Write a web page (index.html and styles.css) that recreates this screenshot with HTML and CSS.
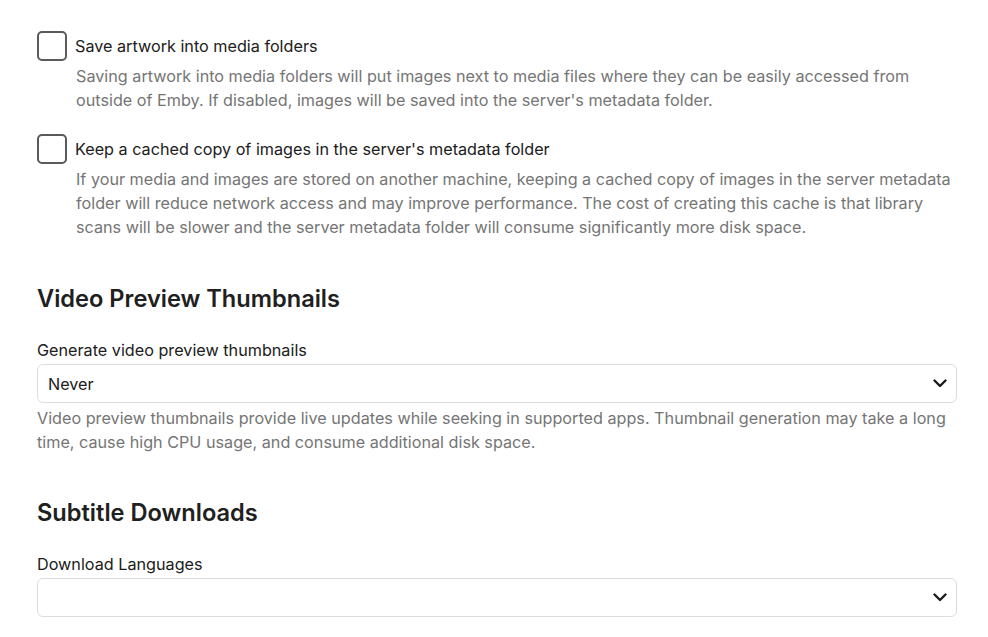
FILE: index.html
```html
<!DOCTYPE html>
<html lang="en">
<head>
<meta charset="utf-8">
<link rel="stylesheet" href="styles.css">
</head>
<body>
<div class="page">
  <div class="check-item">
    <label class="check-row">
      <span class="box"></span>
      <span class="check-label">Save artwork into media folders</span>
    </label>
    <div class="check-desc">Saving artwork into media folders will put images next to media files where they can be easily accessed from outside of Emby. If disabled, images will be saved into the server's metadata folder.</div>
  </div>
  <div class="check-item">
    <label class="check-row">
      <span class="box"></span>
      <span class="check-label">Keep a cached copy of images in the server's metadata folder</span>
    </label>
    <div class="check-desc">If your media and images are stored on another machine, keeping a cached copy of images in the server metadata folder will reduce network access and may improve performance. The cost of creating this cache is that library scans will be slower and the server metadata folder will consume significantly more disk space.</div>
  </div>

  <h2 class="section-title">Video Preview Thumbnails</h2>
  <div class="field">
    <div class="field-label">Generate video preview thumbnails</div>
    <div class="select">
      <span class="select-value">Never</span>
      <svg class="chev" width="14" height="9" viewBox="0 0 14 9"><path d="M1.5 1.5 L7 7 L12.5 1.5" fill="none" stroke="#1a1a1a" stroke-width="2.4" stroke-linecap="round" stroke-linejoin="round"/></svg>
    </div>
    <div class="field-desc">Video preview thumbnails provide live updates while seeking in supported apps. Thumbnail generation may take a long time, cause high CPU usage, and consume additional disk space.</div>
  </div>

  <h2 class="section-title">Subtitle Downloads</h2>
  <div class="field">
    <div class="field-label">Download Languages</div>
    <div class="select">
      <span class="select-value"></span>
      <svg class="chev" width="14" height="9" viewBox="0 0 14 9"><path d="M1.5 1.5 L7 7 L12.5 1.5" fill="none" stroke="#1a1a1a" stroke-width="2.4" stroke-linecap="round" stroke-linejoin="round"/></svg>
    </div>
  </div>
</div>
</body>
</html>
```

FILE: styles.css
```css
html, body {
  margin: 0;
  padding: 0;
  background: #ffffff;
}
body {
  font-family: Inter, "Noto Sans", sans-serif;
  color: #222222;
  -webkit-font-smoothing: antialiased;
}
.page {
  width: 920px;
  padding: 31px 0 0 37px;
}
.check-item {
  margin-bottom: 22px;
}
.check-row {
  display: flex;
  align-items: center;
  gap: 8px;
}
.box {
  width: 26px;
  height: 26px;
  border: 2px solid #5a5a5a;
  border-radius: 5px;
  flex: none;
}
.check-label {
  font-size: 16.2px;
  color: #202020;
}
.check-desc {
  margin-left: 39px;
  margin-top: 3px;
  font-size: 16.2px;
  line-height: 24px;
  color: #757575;
}
.section-title {
  font-size: 23.6px;
  font-weight: 600;
  margin: 44px 0 0 0;
  line-height: 30px;
  color: #202020;
}
.check-item + .section-title {
  margin-top: 45px;
}
.field {
  margin-top: 24px;
}
.field-label {
  font-size: 16.2px;
  color: #202020;
  line-height: 24px;
}
.select {
  margin-top: 2px;
  height: 37px;
  border: 1px solid #dcdcdc;
  border-radius: 6px;
  display: flex;
  align-items: center;
  justify-content: space-between;
  padding: 0 9px 0 10px;
  box-sizing: content-box;
  width: 899px;
}
.select-value {
  font-size: 16.2px;
  color: #202020;
}
.chev {
  flex: none;
}
.field-desc {
  margin-top: 3px;
  font-size: 16.2px;
  line-height: 24px;
  color: #757575;
}
```
